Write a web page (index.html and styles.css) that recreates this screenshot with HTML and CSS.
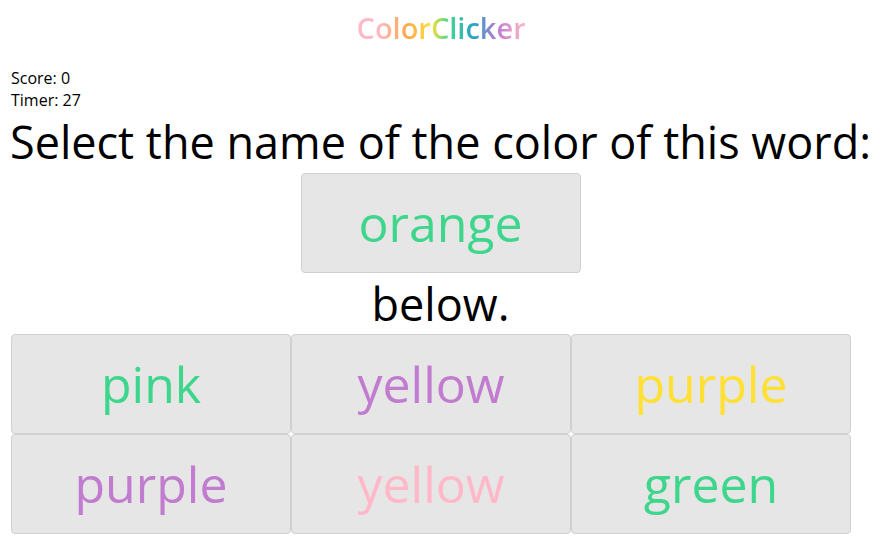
FILE: index.html
```html
<!DOCTYPE html>
<html>
<head>
<meta charset="utf-8">
<link rel="stylesheet" href="styles.css">
</head>
<body>
<div class="page">
  <h1 class="title">ColorClicker</h1>
  <div class="stats">
    <div class="stat">Score: 0</div>
    <div class="stat">Timer: 27</div>
  </div>
  <div class="prompt">
    <div class="prompt-line first">Select the name of the color of this word:</div>
    <div class="word-box"><span class="c-green">orange</span></div>
    <div class="prompt-line last">below.</div>
  </div>
  <div class="choices">
    <div class="choice c-green">pink</div>
    <div class="choice c-purple">yellow</div>
    <div class="choice c-yellow">purple</div>
    <div class="choice c-purple">purple</div>
    <div class="choice c-pink">yellow</div>
    <div class="choice c-green">green</div>
  </div>
</div>
</body>
</html>
```
FILE: styles.css
```css
html, body {
  margin: 0;
  padding: 0;
  background: #ffffff;
}
body {
  font-family: "Open Sans", "DejaVu Sans", sans-serif;
  color: #000;
}
.page {
  width: 881px;
  height: 559px;
  overflow: hidden;
}
.title {
  margin: 0 auto;
  padding-top: 8px;
  height: 40px;
  line-height: 40px;
  font-size: 29px;
  font-weight: 600;
  text-align: center;
  width: 168px;
  background: linear-gradient(90deg, #ffb8c6 0%, #ffb8c6 12%, #ffa84a 30%, #ffe03a 44%, #3ed68e 55%, #2a9fc8 70%, #c17ccf 84%, #ffb8c6 100%);
  -webkit-background-clip: text;
  background-clip: text;
  color: transparent;
}
.stats {
  padding: 19px 0 0 11px;
  font-size: 16px;
  line-height: 22px;
}
.stat {
  height: 22px;
}
.prompt {
  text-align: center;
  font-size: 45px;
}
.prompt-line.first {
  line-height: 62px;
}
.prompt-line.last {
  line-height: 61px;
}
.word-box {
  width: 278px;
  height: 98px;
  margin: 0 auto;
  background: #e6e6e6;
  border: 1px solid #d0d0d0;
  border-radius: 4px;
  display: flex;
  align-items: center;
  justify-content: center;
  font-size: 50px;
}
.choices {
  display: grid;
  grid-template-columns: repeat(3, 280px);
  grid-auto-rows: 100px;
  padding-left: 11px;
}
.choice {
  background: #e6e6e6;
  border: 1px solid #d0d0d0;
  border-radius: 4px;
  display: flex;
  align-items: center;
  justify-content: center;
  font-size: 50px;
}
.c-green { color: #3dd68c; }
.c-purple { color: #c17ccf; }
.c-yellow { color: #ffe033; }
.c-pink { color: #ffb8c8; }
```
